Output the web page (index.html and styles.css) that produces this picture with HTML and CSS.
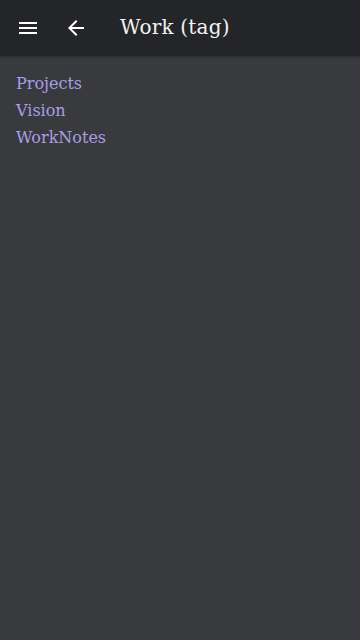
FILE: index.html
```html
<!DOCTYPE html>
<html>
<head>
<meta charset="utf-8">
<link rel="stylesheet" href="styles.css">
</head>
<body>
<header class="bar">
  <button class="icon-btn menu" aria-label="Menu">
    <svg width="24" height="24" viewBox="0 0 24 24"><path d="M3 6h18v2H3zM3 11h18v2H3zM3 16h18v2H3z" fill="#fff"/></svg>
  </button>
  <button class="icon-btn back" aria-label="Back">
    <svg width="24" height="24" viewBox="0 0 24 24"><path d="M20 11H7.83l5.59-5.59L12 4l-8 8 8 8 1.41-1.41L7.83 13H20v-2z" fill="#fff"/></svg>
  </button>
  <h1 class="title">Work (tag)</h1>
</header>
<main class="content">
  <a class="link" href="#">Projects</a>
  <a class="link" href="#">Vision</a>
  <a class="link" href="#">WorkNotes</a>
</main>
</body>
</html>
```
FILE: styles.css
```css
html, body {
  margin: 0;
  padding: 0;
  height: 100%;
}
body {
  background: #393a3e;
  font-family: "DejaVu Serif", "Liberation Serif", serif;
}
.bar {
  height: 56px;
  background: #242528;
  display: flex;
  align-items: center;
  padding-left: 16px;
  box-shadow: 0 1px 3px rgba(0,0,0,0.3);
}
.icon-btn {
  background: none;
  border: none;
  padding: 0;
  width: 24px;
  height: 24px;
  display: flex;
  align-items: center;
  justify-content: center;
}
.back {
  margin-left: 24px;
}
.title {
  margin: -2px 0 0 32px;
  color: #f2f2f2;
  font-size: 20px;
  font-weight: normal;
  letter-spacing: 0.2px;
}
.content {
  display: flex;
  flex-direction: column;
  align-items: flex-start;
  padding: 14px 16px;
}
.link {
  color: #a99ee6;
  text-decoration: none;
  font-size: 16px;
  line-height: 27px;
}
```
